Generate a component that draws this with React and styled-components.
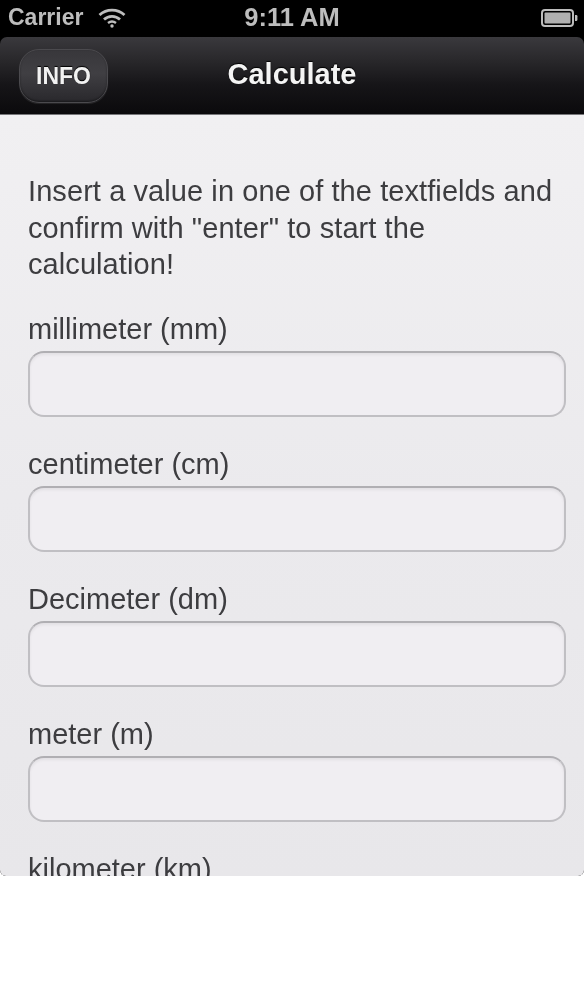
import React from "react";
import styled, { createGlobalStyle } from "styled-components";

const Global = createGlobalStyle`
  html, body {
    margin: 0;
    padding: 0;
    background: #fff;
  }
  * {
    box-sizing: border-box;
  }
`;

const Phone = styled.div`
  width: 584px;
  height: 876px;
  overflow: hidden;
  background: #000;
  border-radius: 0 0 6px 6px;
  font-family: "Liberation Sans", Arial, sans-serif;
  display: flex;
  flex-direction: column;
`;

const StatusBar = styled.div`
  height: 37px;
  flex: none;
  background: #000;
  color: #bdbdbd;
  display: grid;
  grid-template-columns: 1fr auto 1fr;
  align-items: center;
  padding: 0 6px 2px 8px;
  font-weight: 700;
  filter: blur(0.6px);
`;

const Carrier = styled.div`
  display: flex;
  align-items: center;
  gap: 15px;
  font-size: 23px;
`;

const Time = styled.div`
  font-size: 25.5px;
  margin-left: -2px;
`;

const Battery = styled.div`
  justify-self: end;
  display: flex;
`;

const NavBar = styled.div`
  height: 78px;
  flex: none;
  position: relative;
  display: flex;
  align-items: center;
  justify-content: center;
  padding: 0 19px;
  border-radius: 7px 7px 0 0;
  border-bottom: 1px solid #77777a;
  background: linear-gradient(#3a393d 0%, #29282b 30%, #161518 62%, #0b0a0c 100%);
`;

const InfoButton = styled.button`
  position: absolute;
  left: 19px;
  top: 12px;
  width: 89px;
  height: 54px;
  padding: 0;
  border: 1px solid #4b4a4e;
  border-radius: 20px;
  background: linear-gradient(#38373b, #403f43 45%, #29282c 100%);
  box-shadow: 0 1px 1px rgba(255, 255, 255, 0.1), inset 0 -1px 2px rgba(0, 0, 0, 0.4);
  color: #f2f2f2;
  font-family: inherit;
  font-size: 23px;
  font-weight: 700;
  text-shadow: 0 -1px 1px #000;
  filter: blur(0.5px);
`;

const Title = styled.div`
  color: #f4f4f4;
  font-size: 29px;
  font-weight: 700;
  margin-top: -3px;
  text-shadow: 0 -1px 1px #000;
  filter: blur(0.5px);
`;

const Content = styled.div`
  flex: 1;
  min-height: 0;
  overflow: hidden;
  padding: 58px 18px 0 28px;
  background: linear-gradient(#f1f0f2, #ebeaed 50%, #e8e7ea 100%);
  color: #3d3d40;
  filter: blur(0.55px);
`;

const Intro = styled.p`
  margin: 0 0 28px;
  font-size: 29px;
  line-height: 36.5px;
  letter-spacing: 0.08px;
`;

const Field = styled.label`
  display: block;
  margin-bottom: 29px;
`;

const FieldLabel = styled.div`
  font-size: 29px;
  line-height: 37px;
  height: 40px;
`;

const Input = styled.input`
  display: block;
  width: 100%;
  height: 66px;
  padding: 0 14px;
  border: 2px solid #c0bfc3;
  border-top-color: #b0afb3;
  border-radius: 16px;
  background: #f0eef2;
  box-shadow: inset 0 2px 3px rgba(0, 0, 0, 0.06);
  outline: none;
`;

const units = ["millimeter (mm)", "centimeter (cm)", "Decimeter (dm)", "meter (m)", "kilometer (km)"];

const WifiIcon = () => (
  <svg width="28" height="21" viewBox="0 0 28 21" fill="none" stroke="#bdbdbd" strokeWidth="2.8">
    <path d="M1.5 8C8.5 1.5 19.5 1.5 26.5 8" />
    <path d="M6 12.5C10.5 8.3 17.5 8.3 22 12.5" />
    <path d="M10 16C12.5 14 15.5 14 18 16" strokeWidth="2.4" />
    <circle cx="14" cy="19" r="1.7" fill="#bdbdbd" stroke="none" />
  </svg>
);

const BatteryIcon = () => (
  <svg width="37" height="20" viewBox="0 0 37 20">
    <rect x="1" y="2" width="31" height="16" rx="3" fill="none" stroke="#bdbdbd" strokeWidth="2" />
    <rect x="3.5" y="4.5" width="26" height="11" rx="1" fill="#b0b0b0" />
    <path d="M34 7h1.2a1.2 1.2 0 0 1 1.2 1.2v3.6a1.2 1.2 0 0 1-1.2 1.2H34z" fill="#bdbdbd" />
  </svg>
);

const App = () => {
  return (
    <Phone>
      <Global />
      <StatusBar>
        <Carrier>
          Carrier
          <WifiIcon />
        </Carrier>
        <Time>9:11 AM</Time>
        <Battery>
          <BatteryIcon />
        </Battery>
      </StatusBar>
      <NavBar>
        <InfoButton>INFO</InfoButton>
        <Title>Calculate</Title>
      </NavBar>
      <Content>
        <Intro>
          Insert a value in one of the textfields and confirm with "enter" to start the calculation!
        </Intro>
        {units.map((unit) => (
          <Field key={unit}>
            <FieldLabel>{unit}</FieldLabel>
            <Input type="text" />
          </Field>
        ))}
      </Content>
    </Phone>
  );
};

export default App;
